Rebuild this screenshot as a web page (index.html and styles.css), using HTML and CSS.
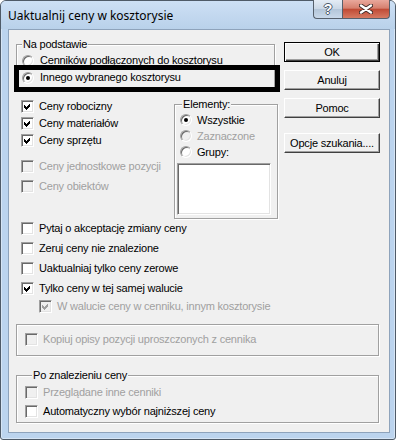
FILE: index.html
```html
<!DOCTYPE html>
<html lang="pl">
  <head>
    <title>Uaktualnij ceny w kosztorysie</title>
    <meta charset="UTF-8" />
    <meta name="viewport" content="width=device-width, initial-scale=1.0" />
    <link rel="stylesheet" href="styles.css">
  </head>
  <body>
    <div class="window">
      <div class="titlebar">
        <span class="title">Uaktualnij ceny w kosztorysie</span>
        <div class="caption-buttons">
          <span class="cap-btn help">?</span>
          <span class="cap-btn close">
            <svg width="14" height="10" viewBox="0 0 14 10">
              <path d="M2 1.5 12 8.5M12 1.5 2 8.5" stroke="#3d2a28" stroke-width="4.2" stroke-linecap="round" />
              <path d="M2 1.5 12 8.5M12 1.5 2 8.5" stroke="#fff" stroke-width="2.4" stroke-linecap="round" />
            </svg>
          </span>
        </div>
      </div>

      <div class="client">
        <div class="top">
          <div class="left">
            <fieldset class="group basis">
              <legend>Na podstawie</legend>
              <div class="row radio-row"><span class="radio"></span>Cenników podłączonych do kosztorysu</div>
              <div class="row radio-row"><span class="radio on"></span>Innego wybranego kosztorysu</div>
            </fieldset>

            <div class="prices">
              <div class="checks">
                <div class="row check-row"><span class="check"><svg width="11" height="11"><path d="M2 4 4 6 8 2v3L4 9 2 7z" /></svg></span>Ceny robocizny</div>
                <div class="row check-row"><span class="check"><svg width="11" height="11"><path d="M2 4 4 6 8 2v3L4 9 2 7z" /></svg></span>Ceny materiałów</div>
                <div class="row check-row"><span class="check"><svg width="11" height="11"><path d="M2 4 4 6 8 2v3L4 9 2 7z" /></svg></span>Ceny sprzętu</div>
                <div class="row check-row disabled gap-big"><span class="check"></span>Ceny jednostkowe pozycji</div>
                <div class="row check-row disabled gap-small"><span class="check"></span>Ceny obiektów</div>
              </div>

              <fieldset class="group elements">
                <legend>Elementy:</legend>
                <div class="row el-row"><span class="radio on"></span>Wszystkie</div>
                <div class="row el-row disabled"><span class="radio"></span>Zaznaczone</div>
                <div class="row el-row"><span class="radio"></span>Grupy:</div>
                <div class="listbox"></div>
              </fieldset>
            </div>

            <div class="options">
              <div class="row opt-row"><span class="check"></span>Pytaj o akceptację zmiany ceny</div>
              <div class="row opt-row"><span class="check"></span>Zeruj ceny nie znalezione</div>
              <div class="row opt-row"><span class="check"></span>Uaktualniaj tylko ceny zerowe</div>
              <div class="row opt-row"><span class="check"><svg width="11" height="11"><path d="M2 4 4 6 8 2v3L4 9 2 7z" /></svg></span>Tylko ceny w tej samej walucie</div>
              <div class="row sub-row disabled"><span class="check"><svg width="11" height="11"><path d="M2 4 4 6 8 2v3L4 9 2 7z" /></svg></span>W walucie ceny w cenniku, innym kosztorysie</div>
            </div>
          </div>

          <div class="buttons">
            <div class="btn default">OK</div>
            <div class="btn">Anuluj</div>
            <div class="btn">Pomoc</div>
            <div class="btn spaced">Opcje szukania....</div>
          </div>
        </div>

        <fieldset class="group copy">
          <div class="row box-row disabled"><span class="check"></span>Kopiuj opisy pozycji uproszczonych z cennika</div>
        </fieldset>

        <fieldset class="group after">
          <legend>Po znalezieniu ceny</legend>
          <div class="row box-row disabled"><span class="check"></span>Przeglądane inne cenniki</div>
          <div class="row box-row"><span class="check"></span>Automatyczny wybór najniższej ceny</div>
        </fieldset>

        <div class="highlight"></div>
      </div>
    </div>
  </body>
</html>
```

FILE: styles.css
```css
body {
  margin: 0;
  font-family: "Liberation Sans", Arial, sans-serif;
  font-size: 11px;
  letter-spacing: -0.2px;
  color: #000;
  background: #fff;
}
.window {
  width: 396px;
  height: 440px;
  box-sizing: border-box;
  border: 1px solid #4f5b68;
  border-radius: 6px 6px 3px 3px;
  background: #bcd4ee;
  box-shadow: inset 0 0 0 1px #d6e5f5;
  display: flex;
  flex-direction: column;
}
.titlebar {
  height: 28px;
  flex: none;
  display: flex;
  justify-content: space-between;
  align-items: flex-start;
  padding: 0 5px 0 7px;
  border-radius: 5px 5px 0 0;
  background: linear-gradient(#cde0f5, #b9d1ea);
}
.title {
  font-family: "Noto Sans", sans-serif;
  font-size: 12px;
  letter-spacing: 0;
  line-height: 16px;
  margin-top: 7px;
}
.caption-buttons {
  display: flex;
  margin-top: -1px;
}
.cap-btn {
  height: 19px;
  box-sizing: border-box;
  border: 1px solid #56606c;
  border-top: none;
  display: flex;
  align-items: center;
  justify-content: center;
}
.help {
  width: 29px;
  border-right: none;
  border-radius: 0 0 0 4px;
  background: linear-gradient(#e4ecf5, #cbd8e6 48%, #b4c6d9 52%, #c9d9ea);
  color: #fff;
  font: bold 14px "Liberation Sans", sans-serif;
  text-shadow: 1px 0 #4b5a6c, -1px 0 #4b5a6c, 0 1px #4b5a6c, 0 -1px #4b5a6c;
}
.close {
  width: 48px;
  border-radius: 0 0 4px 0;
  background: linear-gradient(#e9a89c, #d6806f 45%, #c04b36 52%, #d67a62);
}
.client {
  flex: 1;
  position: relative;
  margin: 0 5px 6px 7px;
  padding: 0 10px 0 7px;
  border: 1px solid #8ea3bb;
  background: #f0f0f0;
}
.top {
  display: flex;
  justify-content: space-between;
}
.left {
  width: 262px;
}
.row {
  display: flex;
  align-items: center;
  line-height: 13px;
  white-space: nowrap;
}
.disabled {
  color: #a0a0a0;
}
.group {
  margin: 0;
  padding: 0;
  min-width: 0;
  border: 1px solid #a0a0a0;
  box-shadow: inset 1px 1px #fff, 1px 1px #fff;
}
.group legend {
  padding: 0 1px;
  line-height: 13px;
  background: #f0f0f0;
}
.check {
  width: 13px;
  height: 13px;
  box-sizing: border-box;
  flex: none;
  border: 1px solid;
  border-color: #a0a0a0 #fff #fff #a0a0a0;
  box-shadow: inset 1px 1px #696969, inset -1px -1px #e3e3e3;
  background: #fff;
}
.check svg {
  display: block;
  shape-rendering: crispEdges;
}
.disabled .check {
  background: #f0f0f0;
}
.disabled .check svg {
  fill: #a0a0a0;
}
.radio {
  width: 12px;
  height: 12px;
  box-sizing: border-box;
  flex: none;
  border-radius: 50%;
  border: 1px solid;
  border-color: #a0a0a0 #fff #fff #a0a0a0;
  box-shadow: inset 1px 1px #696969, inset -1px -1px #e3e3e3;
  background: #fff;
  display: flex;
  align-items: center;
  justify-content: center;
}
.radio.on::after {
  content: "";
  width: 4px;
  height: 4px;
  border-radius: 50%;
  background: #000;
}
.disabled .radio {
  background: #f0f0f0;
}

/* Na podstawie */
.basis {
  width: 259px;
  box-sizing: border-box;
  margin-top: 8px;
  padding: 1px 0 1px 0;
}
.basis legend {
  margin-left: 5px;
}
.radio-row {
  height: 17px;
  padding-left: 5px;
  gap: 6px;
}

/* checkboxes + Elementy */
.prices {
  display: flex;
  align-items: flex-start;
  margin-top: 10px;
}
.checks {
  width: 158px;
}
.check-row {
  height: 17px;
  padding-left: 5px;
  gap: 5px;
}
.gap-big {
  margin-top: 9px;
}
.gap-small {
  margin-top: 3px;
}
.elements {
  width: 104px;
  box-sizing: border-box;
  padding: 1px 0 3px 2px;
}
.elements legend {
  margin-left: 5px;
}
.el-row {
  height: 16px;
  padding-left: 3px;
  gap: 5px;
}
.listbox {
  width: 94px;
  height: 52px;
  box-sizing: border-box;
  margin-top: 3px;
  border: 1px solid;
  border-color: #a0a0a0 #fff #fff #a0a0a0;
  box-shadow: inset 1px 1px #696969, inset -1px -1px #e3e3e3;
  background: #fff;
}

/* lower options */
.options {
  margin-top: -1px;
}
.opt-row {
  height: 20px;
  padding-left: 5px;
  gap: 5px;
}
.sub-row {
  height: 16px;
  padding-left: 23px;
  gap: 5px;
}

/* buttons */
.buttons {
  width: 96px;
  margin-right: -1px;
  padding-top: 12px;
  display: flex;
  flex-direction: column;
  gap: 8px;
}
.btn {
  height: 20px;
  box-sizing: border-box;
  border: 1px solid;
  border-color: #fff #404040 #404040 #fff;
  box-shadow: inset -1px -1px #a0a0a0;
  display: flex;
  align-items: center;
  justify-content: center;
  line-height: 13px;
}
.btn.default {
  border-color: #000;
  box-shadow: inset 1px 1px #fff, inset -1px -1px #404040, inset -2px -2px #a0a0a0;
}
.btn.spaced {
  margin-top: 7px;
}

/* bottom groups */
.copy {
  margin-top: 10px;
  padding: 6px 0 7px 8px;
}
.box-row {
  height: 17px;
  gap: 5px;
}
.after {
  margin-top: 13px;
  padding: 1px 0 1px 8px;
}
.after legend {
  margin-left: 7px;
}
.after .box-row {
  height: 19px;
}

/* black frame drawn over the second option */
.highlight {
  position: absolute;
  left: 5px;
  top: 35px;
  width: 266px;
  height: 27px;
  box-sizing: border-box;
  border: 5px solid #000;
}
```
